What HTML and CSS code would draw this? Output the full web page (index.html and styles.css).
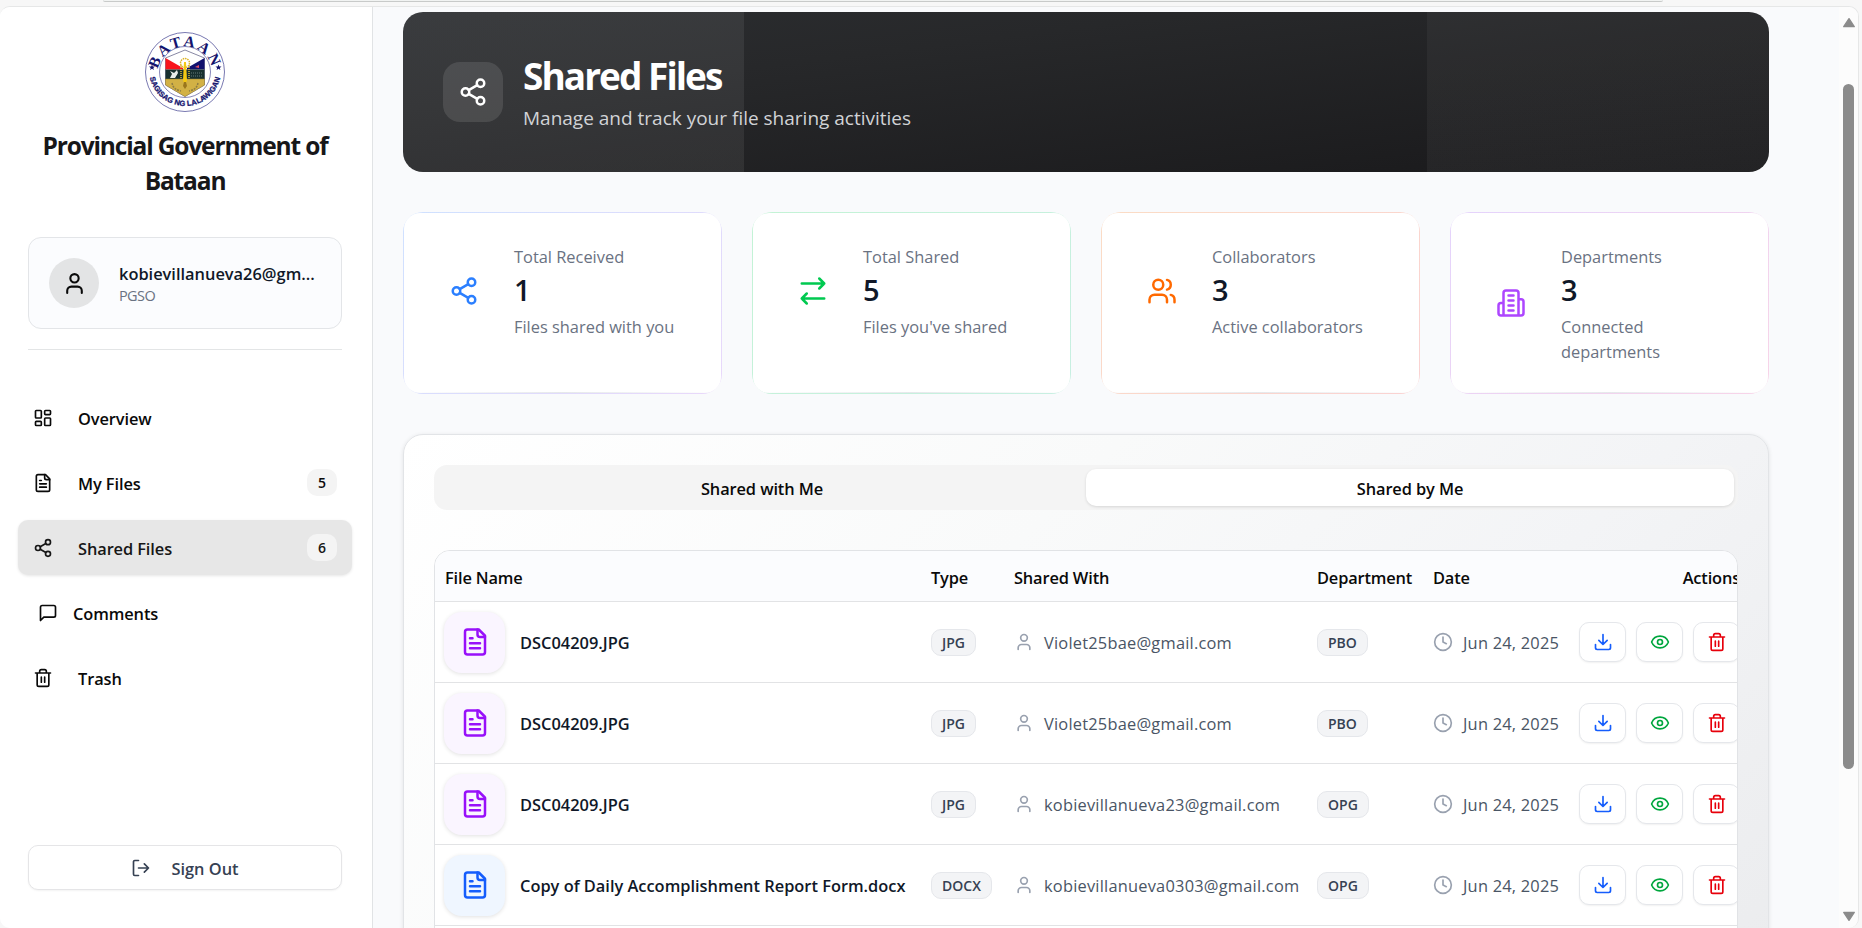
FILE: index.html
```html
<!DOCTYPE html>
<html lang="en">
<head>
<meta charset="utf-8">
<title>Shared Files</title>
<link rel="stylesheet" href="styles.css">
</head>
<body>
<svg class="sprite" aria-hidden="true">
  <symbol id="share" viewBox="0 0 24 24"><circle cx="18" cy="5" r="3"/><circle cx="6" cy="12" r="3"/><circle cx="18" cy="19" r="3"/><path d="M8.59 13.51l6.83 3.98M15.41 6.51l-6.82 3.98"/></symbol>
  <symbol id="user" viewBox="0 0 24 24"><path d="M19 21v-2a4 4 0 0 0-4-4H9a4 4 0 0 0-4 4v2"/><circle cx="12" cy="7" r="4"/></symbol>
  <symbol id="grid" viewBox="0 0 24 24"><rect x="3" y="3" width="7" height="9" rx="1"/><rect x="14" y="3" width="7" height="5" rx="1"/><rect x="14" y="12" width="7" height="9" rx="1"/><rect x="3" y="16" width="7" height="5" rx="1"/></symbol>
  <symbol id="file" viewBox="0 0 24 24"><path d="M15 2H6a2 2 0 0 0-2 2v16a2 2 0 0 0 2 2h12a2 2 0 0 0 2-2V7Z"/><path d="M14 2v4a2 2 0 0 0 2 2h4M10 9H8M16 13H8M16 17H8"/></symbol>
  <symbol id="message" viewBox="0 0 24 24"><path d="M21 15a2 2 0 0 1-2 2H7l-4 4V5a2 2 0 0 1 2-2h14a2 2 0 0 1 2 2z"/></symbol>
  <symbol id="trash" viewBox="0 0 24 24"><path d="M3 6h18M19 6v14a2 2 0 0 1-2 2H7a2 2 0 0 1-2-2V6M8 6V4a2 2 0 0 1 2-2h4a2 2 0 0 1 2 2v2M10 11v6M14 11v6"/></symbol>
  <symbol id="signout" viewBox="0 0 24 24"><path d="M9 21H4.500a1.500 1.500 0 0 1-1.500-1.500v-15A1.500 1.500 0 0 1 4.500 3H9M16 17l5-5-5-5M21 12H9"/></symbol>
  <symbol id="arrows" viewBox="0 0 24 24"><path d="M17 2l4 4-4 4M3 6h18M7 22l-4-4 4-4M21 18H3"/></symbol>
  <symbol id="users" viewBox="0 0 24 24"><path d="M16 21v-2a4 4 0 0 0-4-4H6a4 4 0 0 0-4 4v2"/><circle cx="9" cy="7" r="4"/><path d="M22 21v-2a4 4 0 0 0-3-3.870M16 3.130a4 4 0 0 1 0 7.750"/></symbol>
  <symbol id="building" viewBox="0 0 24 24"><path d="M6 22V4a2 2 0 0 1 2-2h8a2 2 0 0 1 2 2v18ZM6 12H4a2 2 0 0 0-2 2v6a2 2 0 0 0 2 2h2M18 9h2a2 2 0 0 1 2 2v9a2 2 0 0 1-2 2h-2M10 6h4M10 10h4M10 14h4M10 18h4"/></symbol>
  <symbol id="clock" viewBox="0 0 24 24"><circle cx="12" cy="12" r="10"/><path d="M12 6v6l4 2"/></symbol>
  <symbol id="download" viewBox="0 0 24 24"><path d="M21 15v4a2 2 0 0 1-2 2H5a2 2 0 0 1-2-2v-4M7 10l5 5 5-5M12 15V3"/></symbol>
  <symbol id="eye" viewBox="0 0 24 24"><path d="M2.060 12.350a1 1 0 0 1 0-.7 10.750 10.750 0 0 1 19.880 0 1 1 0 0 1 0 .7 10.750 10.750 0 0 1-19.880 0"/><circle cx="12" cy="12" r="3"/></symbol>
</svg>

<div class="chrome"><div class="address"></div></div>
<div class="window">
  <aside class="sidebar">
    <svg class="seal" viewBox="0 0 80 80">
      <defs>
        <path id="arc-top" d="M12.500 42A27.500 27.500 0 0 1 67.500 42"/>
        <path id="arc-bottom" d="M4 38A36 36 0 0 0 76 38"/>
      </defs>
      <circle cx="40" cy="40" r="39.500" fill="#fff" stroke="#6a6aa8" stroke-width=".9"/>
      <circle cx="40" cy="40" r="25.500" fill="#fff" stroke="#6a6aa8" stroke-width=".8"/>
      <path d="M20.500 26L40 18l19.500 8v27L40 64.500 20.500 53z" fill="#fff" stroke="#55557d" stroke-width=".7"/>
      <path d="M20.500 26L38 36v1.500H20.500z" fill="#f8141c"/>
      <path d="M59.500 26L42 36v1.500h17.500z" fill="#10106e"/>
      <path d="M20.500 37.500h39V47h-39z" fill="#18302f"/>
      <path d="M20.500 47h39v6L40 64.500 20.500 53z" fill="#d2b145" stroke="#9a802c" stroke-width=".5"/>
      <path d="M25 46l2-4-2-3 4 2 3-3 1 3-3 5z" fill="#e9eceb"/>
      <path d="M46 41h11M46 44h11" stroke="#6d8583" stroke-width=".9" stroke-dasharray="1 1"/>
      <path d="M50 35l4-2v3z" fill="#e05068"/>
      <circle cx="40" cy="31" r="4.500" fill="none" stroke="#dcb52b" stroke-width="1.500" stroke-dasharray="1.500 .8"/>
      <path d="M36 33v14M44 33v14" stroke="#d9b832" stroke-width="1.500" stroke-dasharray="1 1"/>
      <path d="M39 30h2l1 18-2 6-2-6z" fill="#f4c912"/>
      <path d="M27 51c1 5 4 7 9 8M53 51c-1 5-4 7-9 8" fill="none" stroke="#8f7e43" stroke-width="1.500" stroke-dasharray="2 1"/>
      <path d="M39 50h2l1 4-2 3-2-3z" fill="#9a761b"/>
      <text class="seal-top"><textPath href="#arc-top" startOffset="50%">BATAAN</textPath></text>
      <text class="seal-bottom"><textPath href="#arc-bottom" startOffset="50%">SAGISAG NG LALAWIGAN</textPath></text>
      <path class="seal-star" d="M7 32.500l.8 2.100h2.200l-1.700 1.300.6 2.200L7 36.800l-1.900 1.300.6-2.200L4 34.600h2.200zM73.500 32.500l.8 2.100h2.200l-1.700 1.300.6 2.200-1.900-1.300-1.900 1.300.6-2.200-1.700-1.300h2.200z"/>
    </svg>
    <h1 class="org">Provincial Government of Bataan</h1>
    <div class="profile">
      <div class="avatar"><svg class="icon"><use href="#user"/></svg></div>
      <div class="profile-text">
        <div class="email">kobievillanueva26@gm...</div>
        <div class="office">PGSO</div>
      </div>
    </div>
    <div class="divider"></div>
    <nav class="nav">
      <a class="nav-item"><svg class="icon"><use href="#grid"/></svg><span>Overview</span></a>
      <a class="nav-item"><svg class="icon"><use href="#file"/></svg><span>My Files</span><b class="count">5</b></a>
      <a class="nav-item active"><svg class="icon"><use href="#share"/></svg><span>Shared Files</span><b class="count">6</b></a>
      <a class="nav-item comments"><svg class="icon"><use href="#message"/></svg><span>Comments</span></a>
      <a class="nav-item"><svg class="icon"><use href="#trash"/></svg><span>Trash</span></a>
    </nav>
    <button class="signout"><svg class="icon"><use href="#signout"/></svg><span>Sign Out</span></button>
  </aside>

  <main class="main">
    <header class="banner">
      <div class="banner-icon"><svg class="icon large"><use href="#share"/></svg></div>
      <div>
        <h2 class="banner-title">Shared Files</h2>
        <p class="banner-sub">Manage and track your file sharing activities</p>
      </div>
    </header>

    <section class="stats">
      <div class="stat blue"><div class="stat-in"><svg class="icon large"><use href="#share"/></svg><div class="stat-text"><div class="label">Total Received</div><div class="value">1</div><div class="note">Files shared with you</div></div></div></div>
      <div class="stat green"><div class="stat-in"><svg class="icon large"><use href="#arrows"/></svg><div class="stat-text"><div class="label">Total Shared</div><div class="value">5</div><div class="note">Files you've shared</div></div></div></div>
      <div class="stat orange"><div class="stat-in"><svg class="icon large"><use href="#users"/></svg><div class="stat-text"><div class="label">Collaborators</div><div class="value">3</div><div class="note">Active collaborators</div></div></div></div>
      <div class="stat purple"><div class="stat-in"><svg class="icon large"><use href="#building"/></svg><div class="stat-text"><div class="label">Departments</div><div class="value">3</div><div class="note">Connected departments</div></div></div></div>
    </section>

    <section class="panel">
      <div class="tabs"><div class="tab">Shared with Me</div><div class="tab selected">Shared by Me</div></div>
      <div class="table">
        <div class="row head"><div>File Name</div><div>Type</div><div>Shared With</div><div>Department</div><div>Date</div><div class="right">Actions</div></div>
        <div class="row">
          <div class="name"><i class="thumb"><svg class="icon large"><use href="#file"/></svg></i><span>DSC04209.JPG</span></div>
          <div><span class="tag">JPG</span></div>
          <div class="who"><svg class="icon"><use href="#user"/></svg><span>Violet25bae@gmail.com</span></div>
          <div><span class="tag">PBO</span></div>
          <div class="date"><svg class="icon"><use href="#clock"/></svg><span>Jun 24, 2025</span></div>
          <div class="actions"><button class="act dl"><svg class="icon"><use href="#download"/></svg></button><button class="act view"><svg class="icon"><use href="#eye"/></svg></button><button class="act del"><svg class="icon"><use href="#trash"/></svg></button></div>
        </div>
        <div class="row">
          <div class="name"><i class="thumb"><svg class="icon large"><use href="#file"/></svg></i><span>DSC04209.JPG</span></div>
          <div><span class="tag">JPG</span></div>
          <div class="who"><svg class="icon"><use href="#user"/></svg><span>Violet25bae@gmail.com</span></div>
          <div><span class="tag">PBO</span></div>
          <div class="date"><svg class="icon"><use href="#clock"/></svg><span>Jun 24, 2025</span></div>
          <div class="actions"><button class="act dl"><svg class="icon"><use href="#download"/></svg></button><button class="act view"><svg class="icon"><use href="#eye"/></svg></button><button class="act del"><svg class="icon"><use href="#trash"/></svg></button></div>
        </div>
        <div class="row">
          <div class="name"><i class="thumb"><svg class="icon large"><use href="#file"/></svg></i><span>DSC04209.JPG</span></div>
          <div><span class="tag">JPG</span></div>
          <div class="who"><svg class="icon"><use href="#user"/></svg><span>kobievillanueva23@gmail.com</span></div>
          <div><span class="tag">OPG</span></div>
          <div class="date"><svg class="icon"><use href="#clock"/></svg><span>Jun 24, 2025</span></div>
          <div class="actions"><button class="act dl"><svg class="icon"><use href="#download"/></svg></button><button class="act view"><svg class="icon"><use href="#eye"/></svg></button><button class="act del"><svg class="icon"><use href="#trash"/></svg></button></div>
        </div>
        <div class="row">
          <div class="name"><i class="thumb doc"><svg class="icon large"><use href="#file"/></svg></i><span>Copy of Daily Accomplishment Report Form.docx</span></div>
          <div><span class="tag">DOCX</span></div>
          <div class="who"><svg class="icon"><use href="#user"/></svg><span>kobievillanueva0303@gmail.com</span></div>
          <div><span class="tag">OPG</span></div>
          <div class="date"><svg class="icon"><use href="#clock"/></svg><span>Jun 24, 2025</span></div>
          <div class="actions"><button class="act dl"><svg class="icon"><use href="#download"/></svg></button><button class="act view"><svg class="icon"><use href="#eye"/></svg></button><button class="act del"><svg class="icon"><use href="#trash"/></svg></button></div>
        </div>
        <div class="row"></div>
      </div>
    </section>
  </main>

  <div class="scrollbar">
    <svg class="arrow" viewBox="0 0 12 10"><path d="M6 1.500L10.800 8.800H1.200z"/></svg>
    <div class="thumb-bar"></div>
    <svg class="arrow end" viewBox="0 0 12 10"><path d="M6 8.500L10.800 1.200H1.200z"/></svg>
  </div>
</div>
</body>
</html>
```
FILE: styles.css
```css
* { box-sizing: border-box; margin: 0; padding: 0; }
body {
  width: 1862px;
  height: 928px;
  overflow: hidden;
  background: #f7f7f7;
  font-family: "Open Sans", "Noto Sans", sans-serif;
  font-size: 16.4px;
  line-height: 25px;
  color: #0a0a0a;
  display: flex;
  flex-direction: column;
}
button { font: inherit; color: inherit; background: #fff; }
.sprite { display: none; }
.icon {
  width: 20px;
  height: 20px;
  flex: none;
  fill: none;
  stroke: currentColor;
  stroke-width: 2;
  stroke-linecap: round;
  stroke-linejoin: round;
}
.icon.large { width: 30px; height: 30px; }

.chrome { height: 6px; flex: none; }
.address {
  width: 1560px;
  height: 2px;
  margin-left: 103px;
  background: #f1f3f2;
  border-bottom: 1px solid #c8cac9;
  border-radius: 0 0 8px 8px;
}
.window {
  width: 1859px;
  height: 922px;
  flex: none;
  display: flex;
  background: #f9fafc;
  border: 1px solid #e6e7e7;
  border-width: 1px 1px 0 0;
  border-radius: 10px;
  overflow: hidden;
}

.sidebar {
  width: 373px;
  flex: none;
  padding: 25px 30px 0 28px;
  background: #fff;
  border-right: 1px solid #e1e3e5;
  display: flex;
  flex-direction: column;
}
.seal { width: 80px; height: 80px; margin-left: 117px; flex: none; }
.seal text { fill: #14146e; text-anchor: middle; }
.seal-top { font: bold 15.500px "Liberation Serif", serif; letter-spacing: 2.200px; }
.seal-bottom { font: bold 7.500px "Liberation Sans", sans-serif; letter-spacing: .1px; stroke: #14146e; stroke-width: .3px; }
.seal-star { fill: #14146e; }
.org {
  margin-top: 16px;
  font-size: 24.500px;
  font-weight: 700;
  line-height: 35px;
  letter-spacing: -1.150px;
  text-align: center;
  color: #171719;
}
.profile {
  height: 92px;
  margin-top: 39px;
  padding: 0 20px;
  border: 1px solid #e3e5e8;
  border-radius: 13px;
  background: #fbfcfe;
  display: flex;
  align-items: center;
  gap: 20px;
}
.avatar {
  width: 50px;
  height: 50px;
  border-radius: 50%;
  background: #e3e4e5;
  display: grid;
  place-items: center;
}
.avatar .icon { width: 25px; height: 25px; }
.profile-text { white-space: nowrap; padding-top: 3px; }
.email { font-weight: 600; line-height: 22px; color: #101828; }
.office { font-size: 14.500px; line-height: 22px; color: #6a7282; letter-spacing: -.6px; }
.divider { height: 1px; margin-top: 20px; background: #e3e5e6; flex: none; }
.nav {
  margin: 40px -10px 0;
  display: flex;
  flex-direction: column;
  gap: 10px;
}
.nav-item {
  height: 55px;
  padding: 0 15px;
  border-radius: 10px;
  display: flex;
  align-items: center;
  gap: 25px;
  font-weight: 600;
  letter-spacing: -.1px;
}
.nav-item span { padding-top: 2px; }
.nav-item.active { background: #e7e7e7; color: #171717; box-shadow: 0 1px 3px rgba(0, 0, 0, .1); }
.nav-item.comments { padding-left: 20px; gap: 15px; }
.nav-item .count {
  width: 30px;
  height: 27px;
  margin-left: auto;
  border-radius: 10px;
  background: #f4f4f4;
  font-size: 14px;
  font-weight: 600;
  line-height: 28px;
  text-align: center;
}
.signout {
  height: 45px;
  margin-top: auto;
  margin-bottom: 38px;
  border: 1px solid #e5e5e7;
  border-radius: 10px;
  box-shadow: 0 1px 2px rgba(0, 0, 0, .05);
  display: flex;
  align-items: center;
  justify-content: center;
  gap: 20px;
  color: #364153;
  font-weight: 600;
}
.signout span { padding-top: 2px; }

.main { width: 1466px; flex: none; padding: 5px 0 0 30px; }
.banner {
  width: 1366px;
  height: 160px;
  padding: 2px 40px 0;
  border-radius: 20px;
  background:
    linear-gradient(90deg, rgba(255, 255, 255, .07) 25%, transparent 25% 75%, rgba(255, 255, 255, .045) 75%),
    linear-gradient(173deg, #2b2d30 0%, #27282a 30%, #1c1c1e 85%, #19191b 100%);
  display: flex;
  align-items: center;
  gap: 20px;
  color: #fff;
}
.banner-icon {
  width: 60px;
  height: 60px;
  margin-bottom: 2px;
  border-radius: 17px;
  background: rgba(255, 255, 255, .11);
  display: grid;
  place-items: center;
}
.banner-title { font-size: 37px; line-height: 45px; font-weight: 700; letter-spacing: -1.950px; }
.banner-sub { margin-top: 5px; font-size: 19px; line-height: 30px; color: #d1d3d6; }

.stats {
  width: 1366px;
  margin-top: 40px;
  display: grid;
  grid-template-columns: repeat(4, 1fr);
  gap: 30px;
}
.stat { height: 182px; padding: 1px; border-radius: 20px; }
.stat-in {
  height: 180px;
  padding: 31px 30px 0 45px;
  border-radius: 16px;
  background: linear-gradient(90deg, transparent, #e6e8eb, transparent) bottom / 100% 1px no-repeat #fff;
  display: flex;
  align-items: flex-start;
}
.stat .icon { margin-top: 32px; }
.stat.blue { color: #2b7fff; background: linear-gradient(135deg, #cfe1ff, #e9d8fa); }
.stat.green { color: #00c950; background: linear-gradient(135deg, #c3f3d5, #c8efe2); }
.stat.orange { color: #ff6900; background: linear-gradient(135deg, #fbdcc5, #fad2d2); }
.stat.purple { color: #ad46ff; background: linear-gradient(135deg, #e4d3fc, #f8d4e8); }
.stat.purple .icon { margin-top: 44px; }
.stat-text { margin-left: 35px; color: #6a7282; }
.value { margin: 2px 0 6px; font-size: 29px; line-height: 37px; font-weight: 600; color: #101828; }

.panel {
  width: 1366px;
  height: 700px;
  margin-top: 40px;
  padding: 30px;
  border: 1px solid #e2e4e7;
  border-radius: 20px;
  background: linear-gradient(135deg, #fff 0%, #f9fafa 35%, #f3f4f6 62%, #e9eaec 100%);
  box-shadow: 0 1px 4px rgba(0, 0, 0, .1);
}
.tabs {
  height: 45px;
  padding: 4px;
  border-radius: 13px;
  background: #f4f4f4;
  display: grid;
  grid-template-columns: 1fr 1fr;
}
.tab { line-height: 39px; height: 37px; text-align: center; font-weight: 600; letter-spacing: -.1px; border-radius: 10px; }
.tab.selected { background: #fff; box-shadow: 0 1px 3px rgba(0, 0, 0, .12); }
.table {
  height: 600px;
  margin-top: 40px;
  border: 1px solid #e1e3e6;
  border-radius: 16px;
  background: #fff;
  overflow: hidden;
}
.row {
  width: 1315px;
  height: 81px;
  border-bottom: 1px solid #e2e3e5;
  display: grid;
  grid-template-columns: 486px 83px 303px 116px 146px 181px;
  align-items: center;
  white-space: nowrap;
}
.row > div { padding: 0 10px; }
.row.head { height: 51px; background: #fbfcfe; font-weight: 600; letter-spacing: -.15px; padding-top: 3px; }
.right { text-align: right; }
.row .name { padding-left: 9px; display: flex; align-items: center; gap: 15px; font-weight: 600; color: #101828; }
.thumb {
  width: 61px;
  height: 61px;
  border-radius: 18px;
  background: #faf5ff;
  color: #9810fa;
  box-shadow: 0 1px 4px rgba(0, 0, 0, .12);
  display: grid;
  place-items: center;
}
.thumb.doc { background: #eff6ff; color: #155dfc; }
.tag {
  height: 27px;
  padding: 0 10px;
  border: 1px solid #e5e7eb;
  border-radius: 10px;
  background: #f3f4f6;
  color: #364153;
  font-size: 14px;
  font-weight: 600;
  line-height: 26px;
  display: inline-block;
}
.who, .date { display: flex; align-items: center; gap: 10px; color: #4a5565; letter-spacing: .22px; }
.who .icon, .date .icon { color: #99a1af; }
.actions { display: flex; gap: 10px; }
.act {
  width: 47px;
  height: 40px;
  border: 1px solid #e5e7eb;
  border-radius: 10px;
  box-shadow: 0 1px 2px rgba(0, 0, 0, .06);
  display: grid;
  place-items: center;
  flex: none;
}
.dl { color: #155dfc; }
.view { color: #00a63e; }
.del { color: #e7000b; }

.scrollbar {
  width: 19px;
  flex: none;
  padding: 10px 0 6px;
  background: #fcfcfc;
  display: flex;
  flex-direction: column;
  align-items: center;
}
.arrow { width: 14px; height: 11px; fill: #8b8b8b; stroke: #8b8b8b; stroke-width: 1.200; stroke-linejoin: round; }
.arrow.end { margin-top: auto; }
.thumb-bar { width: 11px; height: 685px; margin-top: 56px; border-radius: 6px; background: #8b8b8b; }
```
